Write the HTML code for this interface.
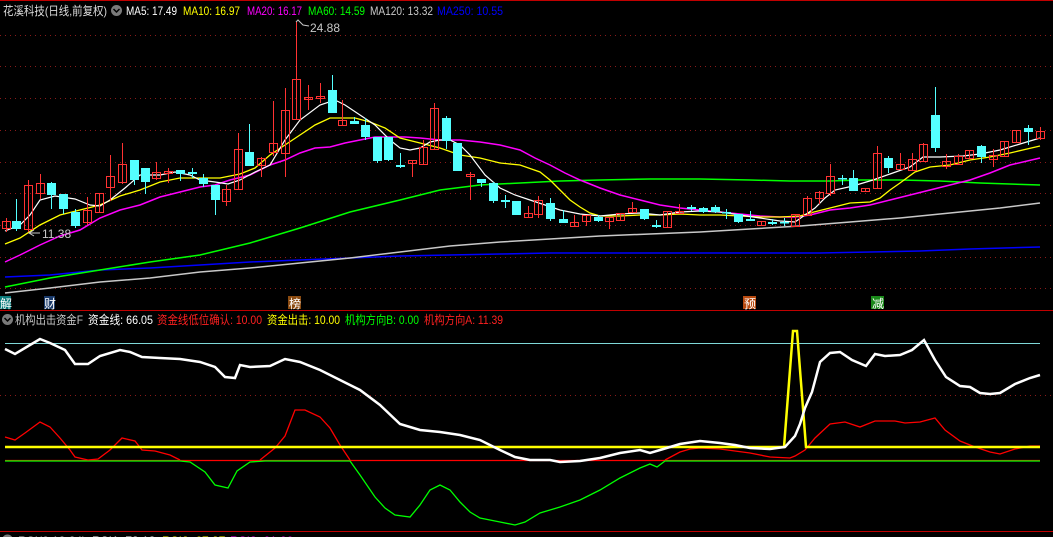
<!DOCTYPE html>
<html><head><meta charset="utf-8"><style>
html,body{margin:0;padding:0;background:#000;width:1053px;height:537px;overflow:hidden}
svg{display:block}
text{font-family:"Liberation Sans","Noto Sans CJK SC",sans-serif;font-size:12px}
.g line{stroke:#8a1a1a;stroke-dasharray:1 4;stroke-width:1}
.r line{stroke:#ff3232}.r rect{fill:none;stroke:#ff3232}
.c line{stroke:#54ffff}.c rect{fill:#54ffff}
polyline{fill:none}
</style></head><body>
<svg width="1053" height="537" viewBox="0 0 1053 537" xmlns="http://www.w3.org/2000/svg">
<rect width="1053" height="537" fill="#000"/>
<line x1="0" y1="0.5" x2="1053" y2="0.5" stroke="#c00000"/>
<g class="g">
<line x1="0" y1="35.5" x2="1053" y2="35.5"/><line x1="0" y1="66.5" x2="1053" y2="66.5"/>
<line x1="0" y1="98.5" x2="1053" y2="98.5"/><line x1="0" y1="130.5" x2="1053" y2="130.5"/>
<line x1="0" y1="162.5" x2="1053" y2="162.5"/><line x1="0" y1="193.5" x2="1053" y2="193.5"/>
<line x1="0" y1="225.5" x2="1053" y2="225.5"/><line x1="0" y1="257.5" x2="1053" y2="257.5"/>
<line x1="0" y1="288.5" x2="1053" y2="288.5"/><line x1="0" y1="395.5" x2="1053" y2="395.5"/>
</g>
<line x1="0" y1="310.5" x2="1053" y2="310.5" stroke="#c00000"/>
<line x1="0" y1="531.5" x2="1053" y2="531.5" stroke="#c00000"/>

<polyline stroke="#0000ff" stroke-width="1.5" points="5,277 50,275 100,270 150,268 200,265 250,262 300,260 350,258 400,256 450,255 500,254 550,253 600,253 700,253 780,253 820,253 870,252 920,251 970,249 1040,247"/>
<polyline stroke="#c8c8c8" stroke-width="1.5" points="5,293 50,288 100,282 150,278 200,272 250,268 300,263 350,258 400,252 450,246 500,242 550,239 600,236 650,234 700,232 750,229 800,226 850,222 900,218 950,213 1000,208 1040,203"/>
<polyline stroke="#00ff00" stroke-width="1.5" points="5,287 50,278 100,270 150,262 200,255 250,243 300,228 350,212 400,200 440,190 480,185 520,183 560,181 600,180 650,179 700,179 750,180 790,181 830,181 860,180 900,180 940,181 980,183 1040,185"/>
<polyline stroke="#ff00ff" stroke-width="1.5" points="5,262 20,255 40,245 60,236 80,230 100,218 120,210 140,205 160,197 180,192 200,187 215,185 230,180 250,175 270,165 285,160 300,153 315,148 330,147 345,143 360,140 375,137 390,137 405,137 420,138 440,140 460,140 480,142 500,145 520,150 535,158 550,165 565,173 580,180 600,188 620,195 640,200 660,205 680,208 700,210 720,212 740,214 760,216 780,217 795,217 810,215 830,210 850,208 870,205 890,200 910,195 930,190 950,185 970,180 990,173 1010,165 1040,158"/>
<polyline stroke="#ffff00" stroke-width="1.3" points="5,244 20,238 40,225 60,215 80,210 100,205 120,196 140,190 160,182 180,178 200,178 220,178 240,174 255,168 270,155 285,145 300,135 315,125 330,118 340,118 355,118 370,122 385,128 400,138 420,143 440,148 460,155 480,158 500,163 520,165 540,172 550,180 560,190 570,200 580,207 590,213 600,216 620,216 640,215 660,215 680,214 700,215 720,215 740,216 760,217 780,217 800,216 810,213 830,208 850,203 870,202 880,198 890,190 900,183 915,172 930,167 950,165 970,160 990,157 1010,153 1040,146"/>
<polyline stroke="#ffffff" stroke-width="1.2" points="5,231 20,225 30,215 40,200 55,196 75,199 90,205 100,206 110,200 125,188 140,175 160,175 175,172 190,175 200,180 215,182 228,184 240,180 255,172 270,165 285,140 300,120 320,105 335,100 345,105 360,115 375,125 390,140 400,148 410,150 420,148 430,142 440,140 450,140 460,145 470,155 485,175 500,188 515,195 530,200 545,205 560,210 580,214 600,216 620,214 640,213 660,215 680,212 700,211 720,212 740,215 760,218 780,221 795,222 805,215 815,208 825,198 835,190 853,186 873,180 890,174 910,167 923,157 940,157 963,156 980,154 1000,150 1020,144 1040,138"/>

<g class="r">
<line x1="6.5" y1="218" x2="6.5" y2="232"/><rect x="2.5" y="221.5" width="8" height="7"/>
<line x1="28.5" y1="180" x2="28.5" y2="232"/><rect x="24.5" y="185.5" width="8" height="44"/>
<line x1="40.5" y1="174" x2="40.5" y2="199"/><rect x="36.5" y="183.5" width="8" height="10"/>
<line x1="87.5" y1="197" x2="87.5" y2="225"/><rect x="83.5" y="210.5" width="8" height="12"/>
<line x1="99.5" y1="193" x2="99.5" y2="213"/><rect x="95.5" y="193.5" width="8" height="19"/>
<line x1="110.5" y1="155" x2="110.5" y2="201"/><rect x="106.5" y="176.5" width="8" height="11"/>
<line x1="122.5" y1="143" x2="122.5" y2="184"/><rect x="118.5" y="164.5" width="8" height="18"/>
<line x1="156.5" y1="162" x2="156.5" y2="180"/><rect x="152.5" y="172.5" width="8" height="6"/>
<line x1="168.5" y1="168" x2="168.5" y2="183"/><rect x="164.5" y="171.5" width="8" height="2"/>
<line x1="226.5" y1="185" x2="226.5" y2="206"/><rect x="222.5" y="189.5" width="8" height="12"/>
<line x1="238.5" y1="133" x2="238.5" y2="190"/><rect x="234.5" y="149.5" width="8" height="40"/>
<line x1="261.5" y1="157" x2="261.5" y2="177"/><rect x="257.5" y="158.5" width="8" height="7"/>
<line x1="273.5" y1="101" x2="273.5" y2="156"/><rect x="269.5" y="143.5" width="8" height="9"/>
<line x1="285.5" y1="88" x2="285.5" y2="177"/><rect x="281.5" y="110.5" width="8" height="43"/>
<line x1="296.5" y1="22" x2="296.5" y2="119"/><rect x="292.5" y="79.5" width="8" height="40"/>
<line x1="308.5" y1="85" x2="308.5" y2="110"/><rect x="304.5" y="97.5" width="8" height="2"/>
<line x1="320.5" y1="83" x2="320.5" y2="103"/><rect x="316.5" y="96.5" width="8" height="2"/>
<line x1="342.5" y1="100" x2="342.5" y2="125"/><rect x="338.5" y="120.5" width="8" height="5"/>
<line x1="412.5" y1="160" x2="412.5" y2="177"/><rect x="408.5" y="160.5" width="8" height="3"/>
<line x1="423.5" y1="140" x2="423.5" y2="165"/><rect x="419.5" y="147.5" width="8" height="17"/>
<line x1="434.5" y1="103" x2="434.5" y2="150"/><rect x="430.5" y="108.5" width="8" height="41"/>
<line x1="470.5" y1="172" x2="470.5" y2="200"/><rect x="466.5" y="174.5" width="8" height="2"/>
<line x1="528.5" y1="206" x2="528.5" y2="217"/><rect x="524.5" y="213.5" width="8" height="4"/>
<line x1="538.5" y1="196" x2="538.5" y2="218"/><rect x="534.5" y="200.5" width="8" height="14"/>
<line x1="574.5" y1="215" x2="574.5" y2="226"/><rect x="570.5" y="222.5" width="8" height="4"/>
<line x1="586.5" y1="215" x2="586.5" y2="226"/><rect x="582.5" y="215.5" width="8" height="6"/>
<line x1="609.5" y1="217" x2="609.5" y2="229"/><rect x="605.5" y="217.5" width="8" height="4"/>
<line x1="620.5" y1="213" x2="620.5" y2="220"/><rect x="616.5" y="213.5" width="8" height="7"/>
<line x1="632.5" y1="202" x2="632.5" y2="212"/><rect x="628.5" y="208.5" width="8" height="4"/>
<line x1="667.5" y1="211" x2="667.5" y2="227"/><rect x="663.5" y="211.5" width="8" height="16"/>
<line x1="679.5" y1="204" x2="679.5" y2="213"/><rect x="675.5" y="211.5" width="8" height="2"/>
<line x1="761.5" y1="221" x2="761.5" y2="225"/><rect x="757.5" y="221.5" width="8" height="4"/>
<line x1="795.5" y1="214" x2="795.5" y2="226"/><rect x="791.5" y="214.5" width="8" height="12"/>
<line x1="807.5" y1="196" x2="807.5" y2="215"/><rect x="803.5" y="198.5" width="8" height="17"/>
<line x1="819.5" y1="191" x2="819.5" y2="204"/><rect x="815.5" y="192.5" width="8" height="6"/>
<line x1="830.5" y1="164" x2="830.5" y2="196"/><rect x="826.5" y="176.5" width="8" height="17"/>
<line x1="865.5" y1="188" x2="865.5" y2="192"/><rect x="861.5" y="188.5" width="8" height="3"/>
<line x1="877.5" y1="146" x2="877.5" y2="188"/><rect x="873.5" y="153.5" width="8" height="35"/>
<line x1="900.5" y1="153" x2="900.5" y2="169"/><rect x="896.5" y="164.5" width="8" height="5"/>
<line x1="912.5" y1="153" x2="912.5" y2="170"/><rect x="908.5" y="159.5" width="8" height="11"/>
<line x1="923.5" y1="143" x2="923.5" y2="161"/><rect x="919.5" y="144.5" width="8" height="17"/>
<line x1="946.5" y1="154" x2="946.5" y2="169"/><rect x="942.5" y="161.5" width="8" height="5"/>
<line x1="958.5" y1="154" x2="958.5" y2="164"/><rect x="954.5" y="156.5" width="8" height="8"/>
<line x1="969.5" y1="150" x2="969.5" y2="158"/><rect x="965.5" y="150.5" width="8" height="8"/>
<line x1="993.5" y1="149" x2="993.5" y2="167"/><rect x="989.5" y="155.5" width="8" height="4"/>
<line x1="1004.5" y1="141" x2="1004.5" y2="156"/><rect x="1000.5" y="141.5" width="8" height="15"/>
<line x1="1016.5" y1="130" x2="1016.5" y2="142"/><rect x="1012.5" y="130.5" width="8" height="12"/>
<line x1="1040.5" y1="127" x2="1040.5" y2="140"/><rect x="1036.5" y="131.5" width="8" height="7"/>
</g>
<g class="c">
<line x1="16.5" y1="199" x2="16.5" y2="231"/><rect x="12" y="221" width="9" height="8"/>
<line x1="51.5" y1="182" x2="51.5" y2="209"/><rect x="47" y="183" width="9" height="12"/>
<line x1="63.5" y1="194" x2="63.5" y2="214"/><rect x="59" y="194" width="9" height="15"/>
<line x1="75.5" y1="209" x2="75.5" y2="228"/><rect x="71" y="212" width="9" height="14"/>
<line x1="134.5" y1="160" x2="134.5" y2="185"/><rect x="130" y="160" width="9" height="20"/>
<line x1="145.5" y1="168" x2="145.5" y2="194"/><rect x="141" y="168" width="9" height="14"/>
<line x1="180.5" y1="170" x2="180.5" y2="181"/><rect x="176" y="170" width="9" height="4"/>
<line x1="192.5" y1="168" x2="192.5" y2="178"/><rect x="188" y="172" width="9" height="2"/>
<line x1="203.5" y1="174" x2="203.5" y2="187"/><rect x="199" y="178" width="9" height="6"/>
<line x1="215.5" y1="185" x2="215.5" y2="215"/><rect x="211" y="185" width="9" height="15"/>
<line x1="249.5" y1="124" x2="249.5" y2="166"/><rect x="245" y="152" width="9" height="14"/>
<line x1="332.5" y1="75" x2="332.5" y2="113"/><rect x="328" y="90" width="9" height="23"/>
<line x1="354.5" y1="117" x2="354.5" y2="124"/><rect x="350" y="121" width="9" height="3"/>
<line x1="365.5" y1="118" x2="365.5" y2="140"/><rect x="361" y="125" width="9" height="12"/>
<line x1="377.5" y1="137" x2="377.5" y2="163"/><rect x="373" y="137" width="9" height="24"/>
<line x1="388.5" y1="138" x2="388.5" y2="161"/><rect x="384" y="137" width="9" height="23"/>
<line x1="400.5" y1="153" x2="400.5" y2="168"/><rect x="396" y="165" width="9" height="2"/>
<line x1="446.5" y1="116" x2="446.5" y2="149"/><rect x="442" y="118" width="9" height="23"/>
<line x1="457.5" y1="143" x2="457.5" y2="171"/><rect x="453" y="143" width="9" height="28"/>
<line x1="481.5" y1="179" x2="481.5" y2="187"/><rect x="477" y="179" width="9" height="4"/>
<line x1="493.5" y1="182" x2="493.5" y2="203"/><rect x="489" y="183" width="9" height="18"/>
<line x1="505.5" y1="195" x2="505.5" y2="208"/><rect x="501" y="200" width="9" height="2"/>
<line x1="516.5" y1="201" x2="516.5" y2="215"/><rect x="512" y="201" width="9" height="14"/>
<line x1="550.5" y1="198" x2="550.5" y2="221"/><rect x="546" y="203" width="9" height="16"/>
<line x1="563.5" y1="210" x2="563.5" y2="223"/><rect x="559" y="219" width="9" height="4"/>
<line x1="598.5" y1="215" x2="598.5" y2="222"/><rect x="594" y="217" width="9" height="4"/>
<line x1="644.5" y1="209" x2="644.5" y2="220"/><rect x="640" y="209" width="9" height="10"/>
<line x1="656.5" y1="220" x2="656.5" y2="228"/><rect x="652" y="225" width="9" height="2"/>
<line x1="691.5" y1="205" x2="691.5" y2="211"/><rect x="687" y="207" width="9" height="2"/>
<line x1="703.5" y1="207" x2="703.5" y2="213"/><rect x="699" y="208" width="9" height="4"/>
<line x1="715.5" y1="205" x2="715.5" y2="213"/><rect x="711" y="207" width="9" height="5"/>
<line x1="726.5" y1="209" x2="726.5" y2="219"/><rect x="722" y="212" width="9" height="1.5"/>
<line x1="738.5" y1="214" x2="738.5" y2="223"/><rect x="734" y="214" width="9" height="8"/>
<line x1="750.5" y1="211" x2="750.5" y2="221"/><rect x="746" y="219" width="9" height="2"/>
<line x1="772.5" y1="219" x2="772.5" y2="225"/><rect x="768" y="222" width="9" height="2"/>
<line x1="784.5" y1="218" x2="784.5" y2="226"/><rect x="780" y="222" width="9" height="1.5"/>
<line x1="842.5" y1="175" x2="842.5" y2="185"/><rect x="838" y="178" width="9" height="1.5"/>
<line x1="853.5" y1="170" x2="853.5" y2="191"/><rect x="849" y="178" width="9" height="13"/>
<line x1="888.5" y1="156" x2="888.5" y2="173"/><rect x="884" y="158" width="9" height="10"/>
<line x1="935.5" y1="87" x2="935.5" y2="152"/><rect x="931" y="115" width="9" height="33"/>
<line x1="981.5" y1="145" x2="981.5" y2="163"/><rect x="977" y="146" width="9" height="11"/>
<line x1="1028.5" y1="125" x2="1028.5" y2="145"/><rect x="1024" y="128" width="9" height="4"/>
</g>

<polyline stroke="#c8c8c8" points="296,22 298,20 303,25 309,26"/>
<text x="310" y="32" fill="#c8c8c8">24.88</text>
<polyline stroke="#c8c8c8" points="34,230 29,233 34,236"/>
<line x1="29" y1="233" x2="40" y2="233" stroke="#c8c8c8"/>
<text x="42" y="238" fill="#c8c8c8">11.38</text>

<text x="3" y="15" fill="#dcdcdc" font-size="13" textLength="104" lengthAdjust="spacingAndGlyphs">花溪科技(日线,前复权)</text>
<circle cx="116.5" cy="10.5" r="5.5" fill="#7a7a7a"/>
<polyline stroke="#000" stroke-width="1.5" points="113.5,9 116.5,12 119.5,9"/>
<text x="126" y="15" fill="#ffffff" textLength="51" lengthAdjust="spacingAndGlyphs">MA5: 17.49</text>
<text x="183" y="15" fill="#ffff00" textLength="57" lengthAdjust="spacingAndGlyphs">MA10: 16.97</text>
<text x="247" y="15" fill="#ff00ff" textLength="55" lengthAdjust="spacingAndGlyphs">MA20: 16.17</text>
<text x="308" y="15" fill="#00ff00" textLength="57" lengthAdjust="spacingAndGlyphs">MA60: 14.59</text>
<text x="370" y="15" fill="#c8c8c8" textLength="63" lengthAdjust="spacingAndGlyphs">MA120: 13.32</text>
<text x="437" y="15" fill="#0000ff" textLength="66" lengthAdjust="spacingAndGlyphs">MA250: 10.55</text>

<rect x="0" y="296" width="11" height="13" fill="#0a7a7a"/><text x="0" y="308" fill="#fff" font-size="11">解</text>
<rect x="44" y="296" width="11" height="13" fill="#1a3a6a"/><text x="44" y="308" fill="#fff" font-size="11">财</text>
<rect x="288" y="296" width="13" height="13" fill="#8a4a10"/><text x="289" y="308" fill="#fff" font-size="11">榜</text>
<rect x="743" y="296" width="13" height="13" fill="#b84a10"/><text x="744" y="308" fill="#fff" font-size="11">预</text>
<rect x="871" y="296" width="13" height="13" fill="#1a8a1a"/><text x="872" y="308" fill="#fff" font-size="11">减</text>

<circle cx="7.5" cy="319.5" r="5.5" fill="#7a7a7a"/>
<polyline stroke="#000" stroke-width="1.5" points="4.5,318 7.5,321 10.5,318"/>
<text x="15" y="324" fill="#c8c8c8" textLength="68" lengthAdjust="spacingAndGlyphs">机构出击资金F</text>
<text x="88" y="324" fill="#ffffff" textLength="65" lengthAdjust="spacingAndGlyphs">资金线: 66.05</text>
<text x="157" y="324" fill="#ff2020" textLength="105" lengthAdjust="spacingAndGlyphs">资金线低位确认: 10.00</text>
<text x="267" y="324" fill="#ffff00" textLength="73" lengthAdjust="spacingAndGlyphs">资金出击: 10.00</text>
<text x="345" y="324" fill="#00ff00" textLength="74" lengthAdjust="spacingAndGlyphs">机构方向B: 0.00</text>
<text x="424" y="324" fill="#ff2020" textLength="79" lengthAdjust="spacingAndGlyphs">机构方向A: 11.39</text>

<line x1="5" y1="343.5" x2="1040" y2="343.5" stroke="#7fd8d8"/>
<line x1="5" y1="460.5" x2="1040" y2="460.5" stroke="#ff0000" stroke-width="1.3"/>
<polyline stroke="#00ff00" stroke-width="1.3" points="5,461 180,461 190,462 205,472 215,485 228,488 237,471 250,462 265,461 350,461 360,475 375,497 385,508 395,515 410,517 420,505 430,490 440,485 450,490 460,502 470,512 480,518 500,522 515,525 525,522 540,513 560,507 580,500 600,490 620,478 640,468 650,464 657,467 665,461 1040,461"/>
<polyline stroke="#ff0000" stroke-width="1.3" points="5,437 15,440 25,433 40,422 50,427 60,438 70,450 75,457 88,460 98,459 110,450 122,438 135,441 142,450 155,451 170,455 180,460"/>
<polyline stroke="#ff0000" stroke-width="1.3" points="260,460 275,448 285,436 295,410 305,410 320,417 330,428 340,445 350,460"/>
<polyline stroke="#ff0000" stroke-width="1.3" points="665,460 680,452 690,449 700,448 720,449 735,451 750,453 770,457 790,458 795,456 805,450 815,438 830,424 845,422 860,427 875,421 895,421 905,423 920,422 935,418 945,430 960,441 975,447 990,452 1000,454 1015,449 1030,446 1040,446"/>
<polyline stroke="#ffff00" stroke-width="2.5" points="5,447 784,447 793,331 797,331 806,447 1040,447"/>
<polyline stroke="#ffffff" stroke-width="2.5" points="5,349 15,354 30,345 40,339 50,343 65,350 75,364 88,364 100,356 120,350 130,352 142,357 160,358 180,359 200,362 215,367 225,377 235,378 240,365 250,367 270,366 285,359 300,362 320,370 340,380 360,390 380,405 400,424 420,430 440,432 460,435 480,440 500,450 515,457 530,460 550,460 560,462 580,461 600,458 620,453 640,450 650,453 660,450 680,444 700,441 720,443 735,445 750,448 770,449 785,447 795,436 800,424 805,408 812,392 820,362 830,353 840,352 852,360 866,366 875,354 885,356 900,355 912,350 924,340 935,360 946,377 960,386 970,387 980,393 990,394 1000,393 1015,384 1030,378 1040,375"/>

<circle cx="7.5" cy="540" r="5.5" fill="#7a7a7a"/>
<text x="18" y="545" fill="#c8c8c8">RSI(6,12,24)</text>
<text x="92" y="545" fill="#ffffff">RSI1: 73.13</text>
<text x="162" y="545" fill="#ffff00">RSI2: 67.87</text>
<text x="230" y="545" fill="#ff00ff">RSI3: 61.00</text>
</svg>
</body></html>
